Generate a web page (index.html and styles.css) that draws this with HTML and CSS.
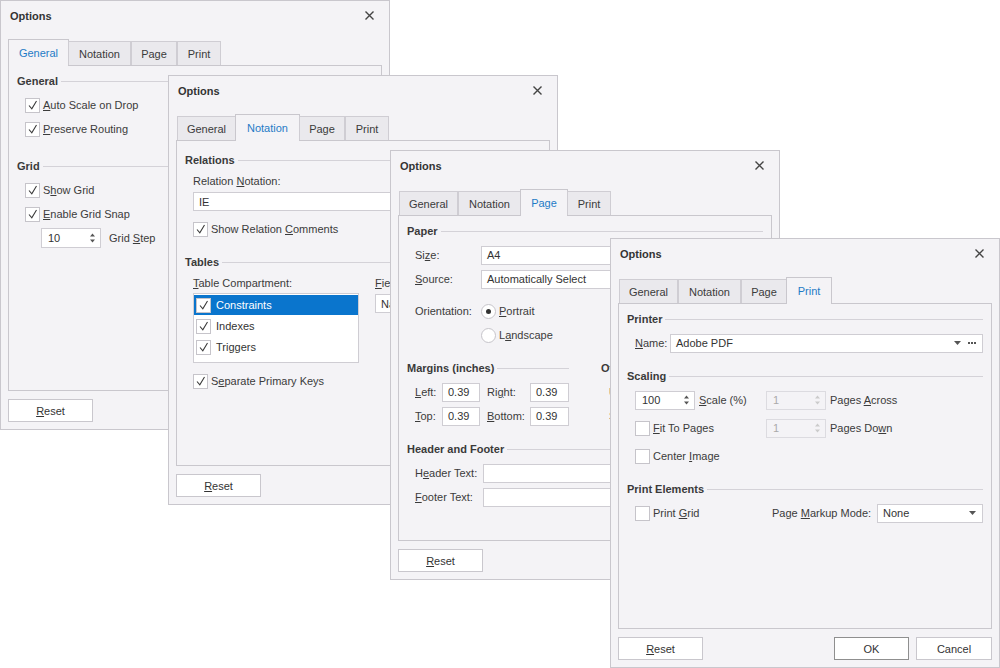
FILE: index.html
```html
<!DOCTYPE html>
<html>
<head>
  <meta charset="utf-8">
  <title>Options</title>
  <link rel="stylesheet" href="styles.css">
</head>
<body>
<div class="desk">

  <!-- General tab -->
  <div class="dialog dlg-general">
    <div class="titlebar">
      <span class="title">Options</span>
      <svg class="close" width="9" height="9" viewBox="0 0 9 9"><path d="M0.5 0.5L8.5 8.5M8.5 0.5L0.5 8.5"/></svg>
    </div>
    <div class="tabs">
      <div class="tab t-general active">General</div>
      <div class="tab t-notation">Notation</div>
      <div class="tab t-page">Page</div>
      <div class="tab t-print">Print</div>
    </div>
    <div class="page">
      <div class="group">
        <div class="ghead">General</div>
        <div class="gbody">
          <div class="row"><span class="cb"><svg width="13" height="13" viewBox="0 0 13 13"><path d="M3 6.5L5.8 9.8L10.5 2"/></svg></span><span><u>A</u>uto Scale on Drop</span></div>
          <div class="row"><span class="cb"><svg width="13" height="13" viewBox="0 0 13 13"><path d="M3 6.5L5.8 9.8L10.5 2"/></svg></span><span><u>P</u>reserve Routing</span></div>
        </div>
      </div>
      <div class="group wide">
        <div class="ghead">Grid</div>
        <div class="gbody">
          <div class="row"><span class="cb"><svg width="13" height="13" viewBox="0 0 13 13"><path d="M3 6.5L5.8 9.8L10.5 2"/></svg></span><span>S<u>h</u>ow Grid</span></div>
          <div class="row"><span class="cb"><svg width="13" height="13" viewBox="0 0 13 13"><path d="M3 6.5L5.8 9.8L10.5 2"/></svg></span><span><u>E</u>nable Grid Snap</span></div>
          <div class="row">
            <div class="spin step">10<svg class="arrows" width="7" height="12" viewBox="0 0 7 12"><path d="M1 4.5L3.5 1.5L6 4.5zM1 7.5L3.5 10.5L6 7.5z"/></svg></div>
            <span class="step-label">Grid <u>S</u>tep</span>
          </div>
        </div>
      </div>
    </div>
    <div class="footer"><button class="btn reset"><u>R</u>eset</button></div>
  </div>

  <!-- Notation tab -->
  <div class="dialog dlg-notation">
    <div class="titlebar">
      <span class="title">Options</span>
      <svg class="close" width="9" height="9" viewBox="0 0 9 9"><path d="M0.5 0.5L8.5 8.5M8.5 0.5L0.5 8.5"/></svg>
    </div>
    <div class="tabs">
      <div class="tab t-general">General</div>
      <div class="tab t-notation active">Notation</div>
      <div class="tab t-page">Page</div>
      <div class="tab t-print">Print</div>
    </div>
    <div class="page pg-notation">
      <div class="group">
        <div class="ghead">Relations</div>
        <div class="nbody">
          <div class="flabel">Relation <u>N</u>otation:</div>
          <div class="edit n-edit">IE</div>
          <div class="row n-row"><span class="cb"><svg width="13" height="13" viewBox="0 0 13 13"><path d="M3 6.5L5.8 9.8L10.5 2"/></svg></span><span>Show Relation <u>C</u>omments</span></div>
        </div>
      </div>
      <div class="group">
        <div class="ghead">Tables</div>
        <div class="nbody ncols">
          <div class="ncol-l">
            <div class="flabel"><u>T</u>able Compartment:</div>
            <div class="list">
              <div class="li sel"><span class="cb"><svg width="13" height="13" viewBox="0 0 13 13"><path d="M3 6.5L5.8 9.8L10.5 2"/></svg></span>Constraints</div>
              <div class="li"><span class="cb"><svg width="13" height="13" viewBox="0 0 13 13"><path d="M3 6.5L5.8 9.8L10.5 2"/></svg></span>Indexes</div>
              <div class="li"><span class="cb"><svg width="13" height="13" viewBox="0 0 13 13"><path d="M3 6.5L5.8 9.8L10.5 2"/></svg></span>Triggers</div>
            </div>
          </div>
          <div class="ncol-r">
            <div class="flabel"><u>F</u>ields:</div>
            <div class="edit n-combo">Name</div>
          </div>
        </div>
        <div class="nbody">
          <div class="row n-row"><span class="cb"><svg width="13" height="13" viewBox="0 0 13 13"><path d="M3 6.5L5.8 9.8L10.5 2"/></svg></span><span>S<u>e</u>parate Primary Keys</span></div>
        </div>
      </div>
    </div>
    <div class="footer"><button class="btn reset"><u>R</u>eset</button></div>
  </div>

  <!-- Page tab -->
  <div class="dialog dlg-page">
    <div class="titlebar">
      <span class="title">Options</span>
      <svg class="close" width="9" height="9" viewBox="0 0 9 9"><path d="M0.5 0.5L8.5 8.5M8.5 0.5L0.5 8.5"/></svg>
    </div>
    <div class="tabs">
      <div class="tab t-general">General</div>
      <div class="tab t-notation">Notation</div>
      <div class="tab t-page active">Page</div>
      <div class="tab t-print">Print</div>
    </div>
    <div class="page">
      <div class="group">
        <div class="ghead">Paper</div>
        <div class="gbody">
          <div class="row"><span class="flab">Si<u>z</u>e:</span><div class="edit grow">A4</div></div>
          <div class="row"><span class="flab"><u>S</u>ource:</span><div class="edit grow">Automatically Select</div></div>
          <div class="orient">
            <div class="row"><span class="flab">Orientation:</span><span class="rb on"></span><span><u>P</u>ortrait</span></div>
            <div class="row"><span class="flab"></span><span class="rb"></span><span>L<u>a</u>ndscape</span></div>
          </div>
        </div>
      </div>
      <div class="cols2">
        <div class="group mcol">
          <div class="ghead">Margins (inches)</div>
          <div class="gbody">
            <div class="row"><span class="ml"><u>L</u>eft:</span><div class="edit mi">0.39</div><span class="mr">Ri<u>g</u>ht:</span><div class="edit mi2">0.39</div></div>
            <div class="row"><span class="ml"><u>T</u>op:</span><div class="edit mi">0.39</div><span class="mr"><u>B</u>ottom:</span><div class="edit mi2">0.39</div></div>
          </div>
        </div>
        <div class="group ocol">
          <div class="ghead">Other</div>
          <div class="gbody">
            <div class="row"><span>Units:</span></div>
            <div class="row"><span>Scale:</span></div>
          </div>
        </div>
      </div>
      <div class="group">
        <div class="ghead">Header and Footer</div>
        <div class="gbody">
          <div class="row"><span class="flab hf">H<u>e</u>ader Text:</span><div class="edit grow"></div></div>
          <div class="row"><span class="flab hf"><u>F</u>ooter Text:</span><div class="edit grow"></div></div>
        </div>
      </div>
    </div>
    <div class="footer"><button class="btn reset"><u>R</u>eset</button></div>
  </div>

  <!-- Print tab -->
  <div class="dialog dlg-print">
    <div class="titlebar">
      <span class="title">Options</span>
      <svg class="close" width="9" height="9" viewBox="0 0 9 9"><path d="M0.5 0.5L8.5 8.5M8.5 0.5L0.5 8.5"/></svg>
    </div>
    <div class="tabs">
      <div class="tab t-general">General</div>
      <div class="tab t-notation">Notation</div>
      <div class="tab t-page">Page</div>
      <div class="tab t-print active">Print</div>
    </div>
    <div class="page">
      <div class="group">
        <div class="ghead">Printer</div>
        <div class="gbody">
          <div class="row">
            <span class="plabel"><u>N</u>ame:</span>
            <div class="edit grow">Adobe PDF
              <span class="trail">
                <svg width="7" height="4" viewBox="0 0 7 4"><path d="M0 0H7L3.5 4Z"/></svg>
                <svg width="8" height="2" viewBox="0 0 8 2"><rect x="0" y="0" width="2" height="2"/><rect x="3" y="0" width="2" height="2"/><rect x="6" y="0" width="2" height="2"/></svg>
              </span>
            </div>
          </div>
        </div>
      </div>
      <div class="group">
        <div class="ghead">Scaling</div>
        <div class="gbody g28">
          <div class="row r28">
            <div class="cell131">
              <div class="spin">100<svg class="arrows" width="7" height="12" viewBox="0 0 7 12"><path d="M1 4.5L3.5 1.5L6 4.5zM1 7.5L3.5 10.5L6 7.5z"/></svg></div>
              <span class="sl"><u>S</u>cale (%)</span>
            </div>
            <div class="spin off">1<svg class="arrows" width="7" height="12" viewBox="0 0 7 12"><path d="M1 4.5L3.5 1.5L6 4.5zM1 7.5L3.5 10.5L6 7.5z"/></svg></div>
            <span class="sl">Pages <u>A</u>cross</span>
          </div>
          <div class="row r28">
            <div class="cell131"><span class="cb"></span><span><u>F</u>it To Pages</span></div>
            <div class="spin off">1<svg class="arrows" width="7" height="12" viewBox="0 0 7 12"><path d="M1 4.5L3.5 1.5L6 4.5zM1 7.5L3.5 10.5L6 7.5z"/></svg></div>
            <span class="sl">Pages Do<u>w</u>n</span>
          </div>
          <div class="row r28"><span class="cb"></span><span>Center <u>I</u>mage</span></div>
        </div>
      </div>
      <div class="group tight">
        <div class="ghead">Print Elements</div>
        <div class="gbody">
          <div class="row">
            <div class="cell137"><span class="cb"></span><span>Print <u>G</u>rid</span></div>
            <span class="pm">Page <u>M</u>arkup Mode:</span>
            <div class="edit grow">None
              <span class="trail"><svg width="7" height="4" viewBox="0 0 7 4"><path d="M0 0H7L3.5 4Z"/></svg></span>
            </div>
          </div>
        </div>
      </div>
    </div>
    <div class="footer">
      <button class="btn reset"><u>R</u>eset</button>
      <button class="btn ok">OK</button>
      <button class="btn cancel">Cancel</button>
    </div>
  </div>

</div>
</body>
</html>
```

FILE: styles.css
```css
body {
  margin: 0;
  background: #fff;
  font-family: "Liberation Sans", Arial, sans-serif;
  font-size: 11px;
  color: #3b3b3b;
}

.desk {
  position: relative;
  width: 1000px;
  height: 668px;
  overflow: hidden;
}

/* windows sit on the desk at their own places */
.dialog {
  position: absolute;
  width: 390px;
  height: 430px;
  box-sizing: border-box;
  border: 1px solid #c9c7cd;
  background: #f4f3f6;
  padding: 0 7px;
}
.dlg-general { left: 0; top: 0; }
.dlg-notation { left: 168px; top: 75px; }
.dlg-page { left: 390px; top: 150px; }
.dlg-print { left: 610px; top: 238px; }

.titlebar {
  height: 29px;
  display: flex;
  align-items: center;
  justify-content: space-between;
  padding: 0 8px 0 2px;
  margin-bottom: 9px;
}
.title {
  font-weight: bold;
  color: #333;
}
.close path {
  stroke: #444;
  stroke-width: 1.4;
  fill: none;
}

/* tabs */
.tabs {
  height: 26px;
  display: flex;
  align-items: flex-end;
  padding-left: 1px;
  position: relative;
  z-index: 1;
}
.tab {
  height: 24px;
  box-sizing: border-box;
  border: 1px solid #cfcdd3;
  border-bottom: 0;
  background: #eae9ed;
  display: flex;
  align-items: center;
  justify-content: center;
}
.t-general { width: 59px; }
.t-notation { width: 63px; }
.t-page { width: 46px; }
.t-print { width: 44px; }
.tab.active {
  height: 27px;
  margin: 0 -1px -1px;
  background: #f4f3f6;
  color: #1f7bc6;
  border-color: #c9c7cd;
}
.t-general.active { width: 61px; }
.t-notation.active { width: 65px; }
.t-page.active { width: 48px; }
.t-print.active { width: 46px; }

.page {
  height: 326px;
  box-sizing: border-box;
  border: 1px solid #c9c7cd;
  padding: 7px 8px 0;
}

/* groups */
.group { margin-top: 13px; }
.group:first-child { margin-top: 0; }
.group.wide { margin-top: 17px; }
.group.tight { margin-top: 11px; }

.ghead {
  height: 16px;
  display: flex;
  align-items: center;
  font-weight: bold;
  color: #3a3a3a;
  white-space: nowrap;
}
.ghead::after {
  content: "";
  flex: 1;
  height: 1px;
  background: #d4d2d8;
  margin-left: 3px;
}
.gbody {
  margin-top: 4px;
  padding-left: 8px;
}
.row {
  height: 24px;
  display: flex;
  align-items: center;
  white-space: nowrap;
}

/* check and radio */
.cb {
  width: 15px;
  height: 15px;
  box-sizing: border-box;
  border: 1px solid #c6c4ca;
  background: #fff;
  margin-right: 3px;
  flex: none;
}
.cb svg { display: block; }
.cb path {
  fill: none;
  stroke: #3a3a3a;
  stroke-width: 1.1;
}
.rb {
  width: 15px;
  height: 15px;
  box-sizing: border-box;
  border: 1px solid #c6c4ca;
  border-radius: 50%;
  background: #fff;
  margin-right: 3px;
  display: flex;
  align-items: center;
  justify-content: center;
  flex: none;
}
.rb.on::after {
  content: "";
  width: 5px;
  height: 5px;
  border-radius: 50%;
  background: #333;
}

/* editors */
.edit {
  height: 19px;
  box-sizing: border-box;
  border: 1px solid #cfcdd3;
  background: #fff;
  display: flex;
  align-items: center;
  padding: 0 5px;
  color: #333;
  white-space: nowrap;
}
.grow { flex: 1; }
.trail {
  margin-left: auto;
  display: flex;
  align-items: center;
  gap: 7px;
  padding-right: 1px;
}
.trail path, .trail rect { fill: #555; }

.spin {
  width: 60px;
  height: 19px;
  box-sizing: border-box;
  border: 1px solid #cfcdd3;
  background: #fff;
  display: flex;
  align-items: center;
  justify-content: space-between;
  padding: 0 4px 0 6px;
  flex: none;
  color: #333;
}
.spin .arrows path { fill: #555; }
.spin.off {
  background: transparent;
  border-color: #dcdbe0;
  color: #aaa;
}
.spin.off .arrows path { fill: #cbcbcb; }
.spin.step {
  height: 20px;
  margin-left: 16px;
}
.step-label { margin-left: 8px; }

/* notation page */
.pg-notation { padding-top: 11px; }
.nbody { padding-left: 8px; }
.flabel {
  height: 16px;
  line-height: 16px;
  margin-top: 5px;
  white-space: nowrap;
}
.n-edit { margin-top: 3px; }
.n-row { margin-top: 6px; }
.ncols { display: flex; }
.ncol-l { width: 166px; flex: none; }
.ncol-r { margin-left: 16px; flex: 1; }
.n-combo { margin-top: 3px; }
.list {
  height: 70px;
  box-sizing: border-box;
  border: 1px solid #cfcdd3;
  background: #fff;
  padding-top: 1px;
  margin-top: 2px;
}
.li {
  height: 20px;
  margin-bottom: 1px;
  display: flex;
  align-items: center;
  padding-left: 2px;
  color: #333;
}
.li .cb { margin-right: 5px; }
.li.sel {
  background: #0a75cd;
  color: #fff;
}

/* page page */
.flab { width: 66px; flex: none; }
.flab.hf { width: 68px; }
.orient { margin-top: 8px; }
.cols2 {
  display: flex;
  margin-top: 13px;
}
.cols2 .group { margin-top: 0; }
.mcol { width: 162px; flex: none; }
.ocol { margin-left: 32px; flex: 1; }
.ml { width: 27px; flex: none; }
.mr { width: 43px; flex: none; margin-left: 7px; }
.mi { width: 38px; }
.mi2 { width: 39px; }

/* print page */
.plabel { width: 35px; flex: none; }
.g28 { margin-top: 2px; }
.r28 { height: 28px; }
.cell131 {
  width: 131px;
  flex: none;
  display: flex;
  align-items: center;
}
.cell137 {
  width: 137px;
  flex: none;
  display: flex;
  align-items: center;
}
.sl { margin-left: 4px; }
.pm { width: 105px; flex: none; }

/* buttons */
.footer {
  margin-top: 8px;
  display: flex;
  height: 23px;
}
.btn {
  height: 23px;
  box-sizing: border-box;
  border: 1px solid #c9c7cd;
  background: #fff;
  font: inherit;
  color: #333;
  padding: 0;
}
.reset { width: 85px; }
.ok {
  width: 75px;
  margin-left: auto;
  border-color: #8f8f8f;
}
.cancel {
  width: 76px;
  margin-left: 7px;
}
```
